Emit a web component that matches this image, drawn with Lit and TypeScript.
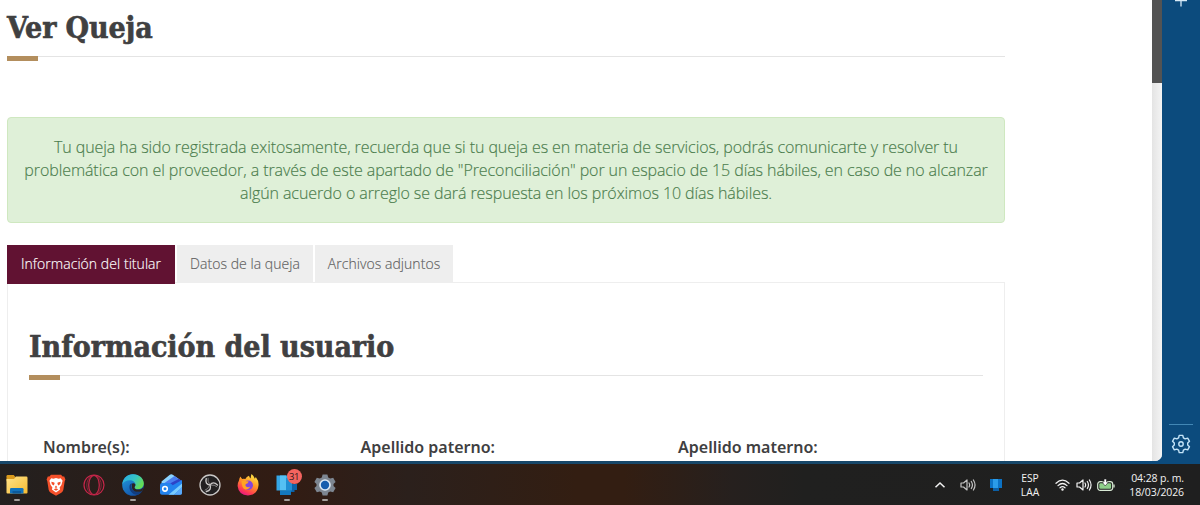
import { html, css, svg, LitElement } from 'lit';
import { customElement, property } from 'lit/decorators.js';
import { classMap } from 'lit/directives/class-map.js';

const folderIcon = svg`
  <defs><linearGradient id="fo" x1="0" y1="0" x2="1" y2="1"><stop offset="0" stop-color="#ffe38a"/><stop offset="1" stop-color="#f6bb31"/></linearGradient></defs>
  <path d="M1.500 3.200q0-1.200 1.200-1.200h6l2 2.200v4H1.500z" fill="#d99a1c"/>
  <path d="M1.500 6H9l2-2.400h10.300q1.200 0 1.200 1.200V19.500q0 1-1 1h-19q-1 0-1-1z" fill="url(#fo)"/>
  <path d="M5 20.500v-4.200q0-1.300 1.300-1.300h10.900q1.300 0 1.300 1.300v4.200z" fill="#1273bd"/>
  <path d="M7.500 18h8.500v2.500H7.500z" fill="#0b5a9c"/>`;

const braveIcon = svg`
  <path d="M7 1.800h10l1.600 1.800 1.600-.1 1.200 3-.7 1.800-1.400 8.600q-.4 1.700-2 2.800L12 22.800l-5.300-3.100q-1.600-1.100-2-2.800L3.300 8.300l-.7-1.800 1.200-3 1.600.1z" fill="#f4502a"/>
  <path d="M7.300 5.200l2 .5 2.700-.6 2.700.6 2-.5 1.900 2.600-1.200 4.200-1.800 2.500.5 1.900-4.100 3-4.100-3 .5-1.900-1.800-2.500-1.200-4.200z" fill="#fff"/>
  <path d="M7.300 8.700l3 .9.300 1-.8 1.800-2-1.200zM16.700 8.700l-3 .9-.3 1 .8 1.800 2-1.200zM12 12.500l1.300 1.700-1.300.8-1.300-.8zM9.700 16.200l2.300-1 2.300 1-2.300 1.600z" fill="#f4502a"/>`;

const operaIcon = svg`
  <g fill="none" stroke="#c7264a" stroke-width="1.200">
    <circle cx="12" cy="12" r="10"/>
    <ellipse cx="12" cy="12" rx="5.300" ry="9.600"/>
    <path d="M9 3.200q-4.200 3.200-4.200 8.800T9 20.800M15 3.200q4.200 3.200 4.200 8.800T15 20.800" stroke-width=".6"/>
  </g>`;

const edgeIcon = svg`
  <defs>
    <linearGradient id="e1" x1="0" y1="0" x2="1" y2=".5"><stop offset="0" stop-color="#28a9e8"/><stop offset=".6" stop-color="#36c6c4"/><stop offset="1" stop-color="#65dd53"/></linearGradient>
    <linearGradient id="e2" x1="0" y1="0" x2=".6" y2="1"><stop offset="0" stop-color="#23a0e3"/><stop offset="1" stop-color="#1251a8"/></linearGradient>
  </defs>
  <circle cx="12" cy="12" r="10.800" fill="url(#e2)"/>
  <path d="M1.300 11.500C2 5.200 6.500 1.200 12 1.200c6.500 0 10.800 4.500 10.800 9.400 0 3.400-2.600 5.700-5.600 5.700-2.400 0-3.700-.9-3.700-1.800 0-.7 1-1.200 1-2.800 0-2.500-2.600-4.400-5.800-4.400-3.600 0-6.400 1.900-7.400 4.200z" fill="url(#e1)"/>
  <path d="M8.600 12.500c-1 4.600 2.600 9.400 8 9.200 2-.8 3.800-2.200 4.900-4-5.600 2.600-11.400.2-11.200-4.600.1-1.300.7-2.300 1.500-2.900-1.400.1-2.800.8-3.200 2.300z" fill="#123d80"/>
  <path d="M11.700 10.200c1.900-.4 3.100.9 2.600 2.300-.2.700-.8 1.200-.8 2 0 1.200 1.600 2.200 4.200 2.100 2.200-.1 3.600-1.100 4.400-2.400.4 1-.2 2.600-1 3.700-3.200 2-10.300 1-10.300-4.500 0-1.300.2-2.500.9-3.200z" fill="#2b2320"/>`;

const walletIcon = svg`
  <path d="M2.500 8.500L10.500 2q1.800-1.300 3.600 0l7.800 5.500V16h-19z" fill="#8bd3ff"/>
  <path d="M4 11L15.500 3l4.300 3L9 13.500z" fill="#4a7df0"/>
  <path d="M9 11.500L20 5.800l3 2.500v6l-12 3z" fill="#2d43c7"/>
  <path d="M1 12q0-2 2-2h6.500q2 0 3.200 1.200l1 1L23 7v13q0 1.800-1.800 1.800H3q-2 0-2-1.800z" fill="#2383ee"/>
  <path d="M9.500 21.800L23 10.500v3.800l-8 7.500z" fill="#7accff"/>
  <path d="M15 21.800l8-7.500V20q0 1.800-1.800 1.800z" fill="#59a9fa"/>
  <circle cx="6" cy="15.800" r="2.300" fill="none" stroke="#fff" stroke-width="1.600"/>`;

const obsIcon = svg`
  <circle cx="12" cy="12" r="10" fill="#211f20" stroke="#c9c7c6" stroke-width="1.300"/>
  <g fill="none" stroke="#c9c7c6" stroke-width="1.400" stroke-linecap="round">
    <path d="M12 12Q6.800 11.300 8.200 5.600"/>
    <path d="M12 12Q6.800 11.300 8.200 5.600" transform="rotate(120 12 12)"/>
    <path d="M12 12Q6.800 11.300 8.200 5.600" transform="rotate(240 12 12)"/>
  </g>
  <g fill="none" stroke="#8e8c8c" stroke-width=".8" stroke-linecap="round">
    <path d="M11.500 11Q9.300 8.500 10 5.200"/>
    <path d="M11.500 11Q9.300 8.500 10 5.200" transform="rotate(120 12 12)"/>
    <path d="M11.500 11Q9.300 8.500 10 5.200" transform="rotate(240 12 12)"/>
  </g>`;

const firefoxIcon = svg`
  <defs><linearGradient id="ff" x1=".8" y1="0" x2=".3" y2="1"><stop offset="0" stop-color="#fff04a"/><stop offset=".45" stop-color="#ff9726"/><stop offset=".8" stop-color="#ff3b52"/><stop offset="1" stop-color="#e31587"/></linearGradient></defs>
  <path d="M4.500 3.500q.7 1.900 1.800 2.600 1.500-.5 3 0Q10.500 3.700 13 2.800q.3 1.800 1.600 2.800.3-3 .9-4.600 2.200 1.400 3.400 4.800l.9-1.800Q23 8 22.500 12.600 21.500 22 12 22.500 2.600 22 1.600 13 1.600 9.500 3 7.400 3.300 5 4.500 3.500z" fill="url(#ff)"/>
  <circle cx="12.300" cy="12.200" r="4.700" fill="#8345dc"/>
  <path d="M5.500 8q3.200-.8 5 .2l2.300.4-1.500 2q-2.300.3-1.700 2.400 2 2 4.600.6-1.300 3.200-4.800 3Q5.700 15.500 5.500 8z" fill="#ffa422"/>`;

const phoneIcon = svg`
  <path d="M11 11h11v6h-2.500v2H11z" fill="#0b62a8"/>
  <path d="M1.500 2.500h14v15h-14z" fill="#35a6e6"/>
  <path d="M5 2.500h6v15H5z" fill="#55c0f3"/>
  <path d="M11 5h6v12.500h-6z" fill="#208ed3"/>
  <path d="M5 17.500h11V22H5z" fill="#1478bd"/>`;

const settingsIcon = svg`
  <path d="M9.600 1.500h4.800l.8 3 2 1.100 3-.8 2.400 4.100L20.500 11v2l2.100 2.100-2.400 4.100-3-.8-2 1.100-.8 3H9.600l-.8-3-2-1.100-3 .8-2.400-4.100L3.500 13v-2L1.400 8.900l2.400-4.100 3 .8 2-1.100z" fill="#7d8691"/>
  <circle cx="12" cy="12" r="5.800" fill="#dde9f5"/><circle cx="12" cy="12" r="4.200" fill="#175eae"/>`;

const speaker = svg`
  <g fill="none" stroke="currentColor" stroke-width="1.200" stroke-linecap="round" stroke-linejoin="round">
    <path d="M1 6h2.500L7 3v10l-3.500-3H1z"/>
    <path d="M9 6q1.300 2 0 4M11.300 4.500q2.300 3.500 0 7M13.400 3q3.300 5 0 10"/>
  </g>`;

interface Shortcut {
  icon: unknown;
  open?: boolean;
  badge?: string;
}

const SHORTCUTS: Shortcut[] = [
  { icon: folderIcon, open: true },
  { icon: braveIcon },
  { icon: operaIcon },
  { icon: edgeIcon, open: true },
  { icon: walletIcon },
  { icon: obsIcon },
  { icon: firefoxIcon },
  { icon: phoneIcon, open: true, badge: '31' },
  { icon: settingsIcon, open: true },
];

@customElement('section-title')
export class SectionTitle extends LitElement {
  static styles = css`
    :host {
      display: block;
      border-bottom: 1px solid #e4e4e4;
      height: 100%;
      box-sizing: border-box;
    }
    .title {
      margin: 0;
      padding-top: 1px;
      font: bold 30px/40px 'DejaVu Serif', serif;
      font-stretch: condensed;
      letter-spacing: -0.1px;
      color: #404041;
      -webkit-text-stroke: 0.6px #404041;
      white-space: nowrap;
    }
    .title.small {
      letter-spacing: -0.03px;
    }
    .frame {
      height: 100%;
      display: flex;
      flex-direction: column;
      justify-content: space-between;
    }
    .accent {
      flex: none;
      width: 31px;
      height: 5px;
      margin-bottom: -5px;
      background: #b38e5d;
    }
  `;

  @property() text = '';
  @property({ type: Boolean }) small = false;

  render() {
    return html`
      <div class="frame">
        <h2 class=${classMap({ title: true, small: this.small })}>${this.text}</h2>
        <div class="accent"></div>
      </div>
    `;
  }
}

@customElement('task-bar')
export class TaskBar extends LitElement {
  static styles = css`
    :host {
      display: flex;
      justify-content: space-between;
      height: 41px;
      box-sizing: border-box;
      background: linear-gradient(90deg, #23201f 0, #2b1d18 12%, #321c13 24%, #2b201c 34%, #331e12 48%, #331e12 52%, #26201e 61%, #20201f 67%, #1f1f1f 100%);
      color: #f2f2f2;
      font-family: 'Open Sans', 'Noto Sans', sans-serif;
    }
    svg {
      display: block;
    }
    .apps {
      display: flex;
      gap: 14.5px;
      padding: 9px 0 0 5px;
    }
    .app {
      position: relative;
      width: 24px;
      display: flex;
      flex-direction: column;
      align-items: center;
      gap: 1.5px;
    }
    .mark {
      width: 6px;
      height: 2.5px;
      border-radius: 2px;
      background: #a5a09d;
    }
    .badge {
      position: absolute;
      left: 12px;
      top: -4px;
      width: 15px;
      height: 15px;
      border-radius: 50%;
      background: #f3645f;
      color: #321b1b;
      font-size: 9.5px;
      line-height: 15px;
      text-align: center;
      letter-spacing: -0.5px;
    }
    .tray {
      display: grid;
      grid-template-columns: 28px 28px 28px 40px 24px 19px 26px 65px;
      align-items: center;
      justify-items: center;
      padding-right: 16px;
    }
    .lang,
    .clock {
      font-size: 10.3px;
      line-height: 14px;
      text-align: center;
    }
    .clock {
      font-size: 10.5px;
      letter-spacing: -0.1px;
      justify-self: end;
      text-align: right;
      white-space: nowrap;
    }
  `;

  render() {
    return html`
      <div class="apps">
        ${SHORTCUTS.map(
          (s) => html`
            <div class="app">
              <svg width="24" height="24" viewBox="0 0 24 24">${s.icon}</svg>
              ${s.open ? html`<div class="mark"></div>` : ''}
              ${s.badge ? html`<div class="badge">${s.badge}</div>` : ''}
            </div>
          `
        )}
      </div>
      <div class="tray">
        <svg width="12" height="12" viewBox="0 0 12 12"><path d="M1.500 8.300L6 4l4.500 4.300" fill="none" stroke="#f2f2f2" stroke-width="1.500"/></svg>
        <svg width="16" height="16" viewBox="0 0 16 16" color="#c4c4c4">${speaker}</svg>
        <svg width="14" height="14" viewBox="0 0 14 14">
          <path d="M1 1h12v9H1z" fill="#0c72c4"/><path d="M4 1h5v9H4z" fill="#2b9ce8"/><path d="M4 10h6v3H4z" fill="#0b5fa5"/>
        </svg>
        <div class="lang">ESP<br />LAA</div>
        <svg width="15" height="14" viewBox="0 0 15 14">
          <g fill="none" stroke="#f2f2f2" stroke-width="1.200" stroke-linecap="round">
            <path d="M1 5.300q6.500-6.200 13 0M3 7.600q4.500-4.200 9 0M5 9.800q2.500-2.300 5 0"/>
          </g>
          <circle cx="7.500" cy="11.500" r="1.200" fill="#f2f2f2"/>
        </svg>
        <svg width="16" height="16" viewBox="0 0 16 16" color="#f2f2f2">${speaker}</svg>
        <svg width="18" height="14" viewBox="0 0 18 14">
          <rect x=".7" y="3.700" width="15" height="8.600" rx="2.500" fill="#1f1f1f" stroke="#d9ead5" stroke-width="1.200"/>
          <rect x="2.300" y="5.300" width="11.800" height="5.400" rx="1.200" fill="#8fd08a"/>
          <path d="M17 6.500v3" stroke="#d9ead5" stroke-width="1.300"/>
          <path d="M7 1h2.500v3h2L8.200 8 5 4h2z" fill="#fff" stroke="#1f1f1f" stroke-width=".6"/>
        </svg>
        <div class="clock">04:28 p. m.<br />18/03/2026</div>
      </div>
    `;
  }
}

@customElement('app-root')
export class AppRoot extends LitElement {
  static styles = css`
    :host {
      display: flex;
      flex-direction: column;
      width: 1200px;
      height: 505px;
      overflow: hidden;
      font-family: 'Noto Sans', 'Open Sans', sans-serif;
      color: #404041;
    }
    .desktop {
      display: flex;
      height: 464px;
      box-sizing: border-box;
      padding-bottom: 3px;
      background: linear-gradient(90deg, #174769 0, #174769 85%, #0c4b7d 97%);
    }
    .window {
      display: flex;
      width: 1162px;
      overflow: hidden;
      border-bottom-right-radius: 7px;
      background: #fff;
    }
    .page {
      padding-left: 7px;
      flex: 1;
    }
    .content {
      width: 998px;
    }
    .heading {
      height: 50px;
      padding-top: 7px;
    }
    .alert {
      height: 106px;
      box-sizing: border-box;
      margin-top: 60px;
      padding-top: 18px;
      border: 1px solid #cfe8c0;
      border-radius: 4px;
      background: #dff0d8;
      color: #4a7c4c;
      font-family: 'Open Sans', 'Noto Sans', sans-serif;
      font-weight: 300;
      font-size: 16px;
      line-height: 23px;
      letter-spacing: -0.08px;
      -webkit-text-stroke: 0.15px #4a7c4c;
      text-align: center;
      white-space: nowrap;
    }
    .tabs {
      display: flex;
      align-items: flex-start;
      gap: 2px;
      height: 37px;
      margin-top: 22px;
    }
    .tab {
      height: 37px;
      width: 136px;
      background: #eee;
      color: #606060;
      font-family: 'Open Sans', 'Noto Sans', sans-serif;
      font-weight: 300;
      font-size: 14px;
      line-height: 37px;
      letter-spacing: 0.05px;
      -webkit-text-stroke: 0.15px currentColor;
      text-align: center;
      white-space: nowrap;
    }
    .tab.active {
      width: 168px;
      height: 39px;
      background: #611232;
      color: #fff;
      z-index: 1;
    }
    .tab.last {
      width: 138px;
    }
    .panel {
      height: 200px;
      box-sizing: border-box;
      padding: 43px 21px 0;
      border: 1px solid #eee;
    }
    .subheading {
      height: 50px;
    }
    .fields {
      display: grid;
      grid-template-columns: 317.5px 317.5px 1fr;
      padding: 60px 14px 0;
      font-weight: 600;
      font-size: 16px;
      line-height: 23px;
    }
    .scrollbar {
      width: 10px;
      background: linear-gradient(90deg, #e4e4e4, #f4f4f4);
    }
    .thumb {
      height: 83px;
      background: #535353;
    }
    .sidebar {
      flex: 1;
      display: flex;
      flex-direction: column;
      justify-content: space-between;
      align-items: center;
      background: #0c4b7d;
    }
    .tools {
      display: flex;
      flex-direction: column;
      align-items: center;
      gap: 9px;
      padding-bottom: 7px;
    }
    .rule {
      width: 24px;
      height: 1px;
      background: #4287b5;
    }
    svg {
      display: block;
    }
  `;

  render() {
    return html`
      <div class="desktop">
        <div class="window">
          <div class="page">
            <div class="content">
              <div class="heading"><section-title text="Ver Queja"></section-title></div>
              <div class="alert">
                Tu queja ha sido registrada exitosamente, recuerda que si tu queja es en materia de servicios, podrás comunicarte y resolver tu<br />
                problemática con el proveedor, a través de este apartado de "Preconciliación" por un espacio de 15 días hábiles, en caso de no alcanzar<br />
                algún acuerdo o arreglo se dará respuesta en los próximos 10 días hábiles.
              </div>
              <div class="tabs">
                <div class="tab active">Información del titular</div>
                <div class="tab">Datos de la queja</div>
                <div class="tab last">Archivos adjuntos</div>
              </div>
              <div class="panel">
                <div class="subheading"><section-title small text="Información del usuario"></section-title></div>
                <div class="fields">
                  <span>Nombre(s):</span>
                  <span>Apellido paterno:</span>
                  <span>Apellido materno:</span>
                </div>
              </div>
            </div>
          </div>
          <div class="scrollbar"><div class="thumb"></div></div>
        </div>
        <div class="sidebar">
          <svg width="14" height="7" viewBox="0 0 14 7"><path d="M1 .5h12M7 0v6.500" stroke="#d8eaf7" stroke-width="1.300"/></svg>
          <div class="tools">
            <div class="rule"></div>
            <svg width="20" height="20" viewBox="0 0 20 20" fill="none" stroke="#c4e4f8" stroke-width="1.400" stroke-linejoin="round">
              <path d="M8.200 1.400h3.600l.6 2.500 1.800 1 2.500-.7 1.800 3.100L16.700 9v2l1.800 1.700-1.800 3.100-2.500-.7-1.800 1-.6 2.500H8.200l-.6-2.500-1.800-1-2.500.7-1.800-3.100L3.300 11V9L1.500 7.300l1.800-3.100 2.500.7 1.800-1z"/>
              <circle cx="10" cy="10" r="2.200"/>
            </svg>
          </div>
        </div>
      </div>
      <task-bar></task-bar>
    `;
  }
}
